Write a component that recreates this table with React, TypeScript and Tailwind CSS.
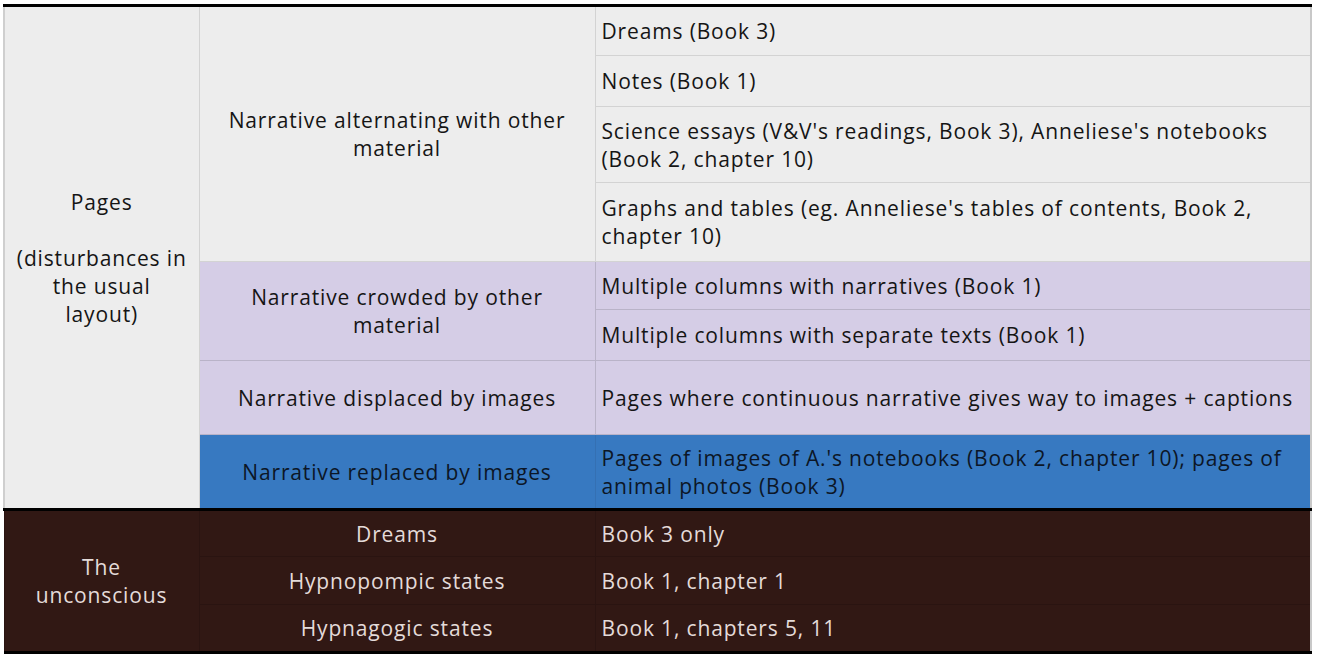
const light = 'bg-[#ededed] border border-[#d3d3d3]'
const purple = 'bg-[#d5cde6] border border-[#b9b3c8]'
const blue = 'bg-[#3779c1] border border-[#3470b3] text-[#0c1626]'
const dark = 'bg-[#311814] border border-[#2a1411] text-[#e4dbd9]'

export default function App() {
  return (
    <div className="min-h-[659px] bg-white pt-1 pl-[3px] pr-[8px]" style={{ fontFamily: '"Open Sans", "Noto Sans", sans-serif' }}>
      <table className="w-[1309px] table-fixed border-collapse border-r-2 border-r-[#c8c8c8] text-[21px] font-medium leading-[28px] tracking-[0.85px] text-[#151515]">
        <colgroup>
          <col className="w-[195px]" />
          <col className="w-[396px]" />
          <col />
        </colgroup>
        <tbody className="border-t-[3px] border-t-black">
          <tr className="h-[50px]">
            <td rowSpan={8} className={`${light} border-l-2 border-l-[#cfcfcf] text-center px-[6px]`}>
              Pages
              <br />
              <br />
              (disturbances in
              <br />
              the usual
              <br />
              layout)
            </td>
            <td rowSpan={4} className={`${light} text-center px-4`}>
              Narrative alternating with other material
            </td>
            <td className={`${light} px-[6px]`}>Dreams (Book 3)</td>
          </tr>
          <tr className="h-[51px]">
            <td className={`${light} px-[6px]`}>Notes (Book 1)</td>
          </tr>
          <tr className="h-[76px]">
            <td className={`${light} px-[6px]`}>
              Science essays (V&amp;V's readings, Book 3), Anneliese's notebooks (Book 2, chapter 10)
            </td>
          </tr>
          <tr className="h-[79px]">
            <td className={`${light} px-[6px]`}>
              Graphs and tables (eg. Anneliese's tables of contents, Book 2, chapter 10)
            </td>
          </tr>
          <tr className="h-[48px]">
            <td rowSpan={2} className={`${purple} text-center px-4`}>
              Narrative crowded by other material
            </td>
            <td className={`${purple} px-[6px]`}>Multiple columns with narratives (Book 1)</td>
          </tr>
          <tr className="h-[51px]">
            <td className={`${purple} px-[6px]`}>Multiple columns with separate texts (Book 1)</td>
          </tr>
          <tr className="h-[74px]">
            <td className={`${purple} text-center px-4`}>Narrative displaced by images</td>
            <td className={`${purple} px-[6px]`}>
              Pages where continuous narrative gives way to images + captions
            </td>
          </tr>
          <tr className="h-[75px]">
            <td className={`${blue} text-center px-4`}>Narrative replaced by images</td>
            <td className={`${blue} px-[6px]`}>
              Pages of images of A.'s notebooks (Book 2, chapter 10); pages of animal photos (Book 3)
            </td>
          </tr>
        </tbody>
        <tbody className="border-t-[3px] border-t-black border-b-[3px] border-b-black">
          <tr className="h-[47px]">
            <td rowSpan={3} className={`${dark} text-center px-[6px]`}>
              The
              <br />
              unconscious
            </td>
            <td className={`${dark} text-center`}>Dreams</td>
            <td className={`${dark} px-[6px]`}>Book 3 only</td>
          </tr>
          <tr className="h-[48px]">
            <td className={`${dark} text-center`}>Hypnopompic states</td>
            <td className={`${dark} px-[6px]`}>Book 1, chapter 1</td>
          </tr>
          <tr className="h-[48px]">
            <td className={`${dark} text-center`}>Hypnagogic states</td>
            <td className={`${dark} px-[6px]`}>Book 1, chapters 5, 11</td>
          </tr>
        </tbody>
      </table>
    </div>
  )
}
